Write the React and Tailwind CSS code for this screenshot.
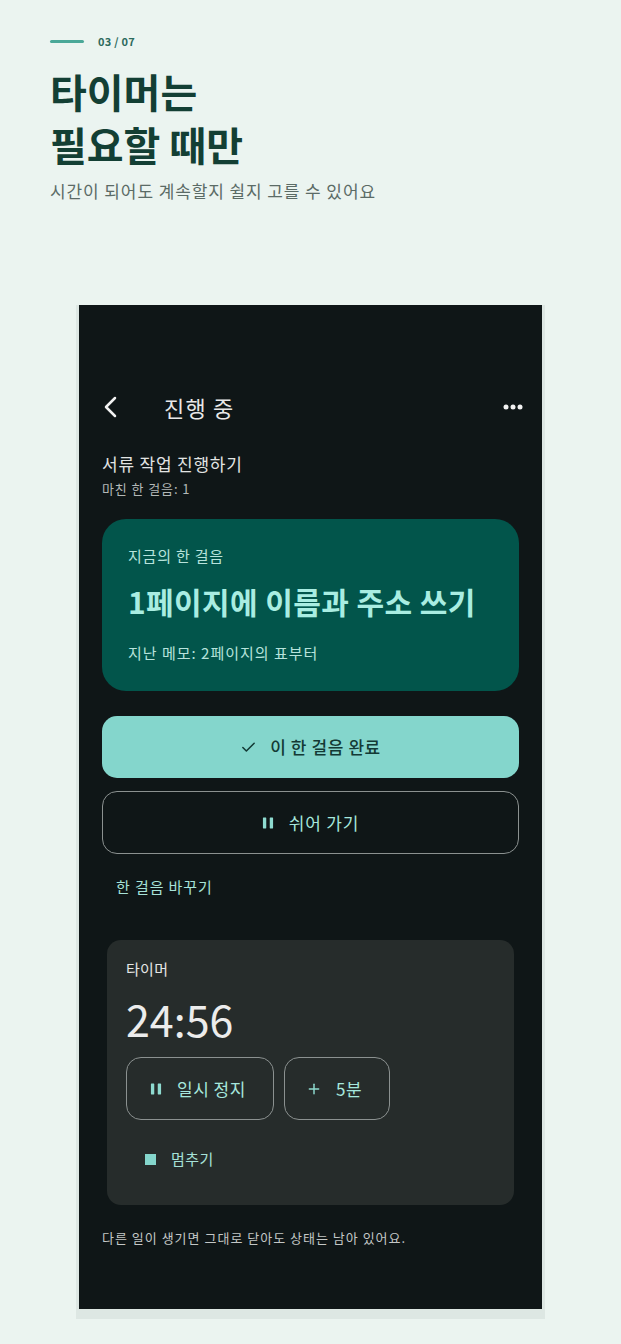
import { Check, Plus } from "lucide-react";

const font = { fontFamily: '"Noto Sans CJK KR", "Noto Sans", sans-serif' };

function PauseIcon({ className }) {
  return (
    <svg viewBox="0 0 12 13" className={className} fill="currentColor">
      <rect x="0.5" y="0.5" width="3.6" height="12" rx="0.5" />
      <rect x="7.9" y="0.5" width="3.6" height="12" rx="0.5" />
    </svg>
  );
}

function BackIcon() {
  return (
    <svg viewBox="0 0 16 22" className="h-[22px] w-[16px]" fill="none" stroke="#f2f2f2" strokeWidth="2.5" strokeLinecap="round" strokeLinejoin="round">
      <polyline points="13,2 4,11 13,20" />
    </svg>
  );
}

function Dots() {
  return (
    <svg viewBox="0 0 20 6" className="h-[6px] w-[20px]" fill="#f2f2f2">
      <circle cx="3" cy="3" r="2.5" />
      <circle cx="10" cy="3" r="2.5" />
      <circle cx="17" cy="3" r="2.5" />
    </svg>
  );
}

export default function App() {
  return (
    <div className="min-h-[1344px] w-full bg-[#ebf4f0]" style={font}>
      <div className="px-[50px] pt-[36px]">
        <div className="flex h-[11px] items-center gap-[14px]">
          <div className="h-[3px] w-[34px] rounded-full bg-[#4aa898]" />
          <span className="text-[11px] font-bold leading-none tracking-wide text-[#2d6a5d]">
            03 / 07
          </span>
        </div>
        <h1 className="mt-[18px] text-[40px] font-bold leading-[53px] text-[#133f34]">
          타이머는
          <br />
          필요할 때만
        </h1>
        <p className="mt-[7px] text-[17px] leading-[26px] tracking-[0.9px] text-[#5b6b66]">
          시간이 되어도 계속할지 쉴지 고를 수 있어요
        </p>
      </div>

      <div className="ml-[76px] mt-[101px] w-[469px] bg-[#dde7e3] pb-[10px]">
        <div className="ml-[3px] flex h-[1004px] w-[463px] flex-col bg-[#0f1617] px-[23px]">
          <div className="mt-[86px] flex h-[32px] items-center">
            <BackIcon />
            <span className="ml-[46px] text-[22px] leading-none tracking-[1.2px] text-[#e8e8e8]">진행 중</span>
            <div className="ml-auto mr-[-4px]">
              <Dots />
            </div>
          </div>

          <div className="mt-[29px] text-[17px] leading-[24px] tracking-[0.8px] text-[#e2e4e3]">서류 작업 진행하기</div>
          <div className="mt-[4px] text-[13px] leading-[18px] tracking-[0.9px] text-[#b3b8b7]">마친 한 걸음: 1</div>

          <div className="mt-[21px] rounded-[24px] bg-[#02554b] px-[26px] pb-[27px] pt-[26px]">
            <div className="text-[15px] leading-[22px] tracking-[0.8px] text-[#b7e3dc]">지금의 한 걸음</div>
            <div className="mt-[14px] text-[30px] font-bold leading-[40px] tracking-[0.4px] text-[#a9ede2]">
              1페이지에 이름과 주소 쓰기
            </div>
            <div className="mt-[21px] text-[15px] leading-[22px] tracking-[1px] text-[#b7e3dc]">지난 메모: 2페이지의 표부터</div>
          </div>

          <button className="mt-[25px] flex h-[62px] w-full items-center justify-center gap-[13px] rounded-[15px] bg-[#84d6cc] text-[17px] font-medium tracking-[0.6px] text-[#133a35]">
            <Check className="h-[17px] w-[17px]" strokeWidth={2.2} />
            이 한 걸음 완료
          </button>

          <button className="mt-[13px] flex h-[63px] w-full items-center justify-center gap-[15px] rounded-[15px] border border-[#8b9190] text-[17px] tracking-[0.8px] text-[#a6e7dd]">
            <PauseIcon className="h-[12px] w-[12px] text-[#8edbd0]" />
            쉬어 가기
          </button>

          <div className="ml-[14px] mt-[22px] text-[15px] leading-[22px] tracking-[0.9px] text-[#a6e2d8]">한 걸음 바꾸기</div>

          <div className="mx-[5px] mt-[42px] rounded-[14px] bg-[#262c2b] px-[19px] pb-[35px] pt-[18px]">
            <div className="text-[15px] leading-[22px] tracking-[0.3px] text-[#e4e6e5]">타이머</div>
            <div className="mt-[12px] text-[43px] leading-[52px] text-[#ececec]">24:56</div>
            <div className="mt-[13px] flex gap-[10px]">
              <button className="flex h-[63px] w-[148px] items-center gap-[15px] rounded-[15px] border border-[#8b9190] pl-[23px] text-[17px] tracking-[0.5px] text-[#a6e7dd]">
                <PauseIcon className="h-[12px] w-[12px] text-[#8edbd0]" />
                일시 정지
              </button>
              <button className="flex h-[63px] w-[106px] items-center gap-[14px] rounded-[15px] border border-[#8b9190] pl-[21px] text-[17px] tracking-[0.5px] text-[#a6e7dd]">
                <Plus className="h-[16px] w-[16px] text-[#8edbd0]" strokeWidth={2.2} />
                5분
              </button>
            </div>
            <div className="ml-[19px] mt-[28px] flex h-[22px] items-center gap-[15px]">
              <div className="h-[11px] w-[11px] bg-[#84d6cc]" />
              <span className="text-[15px] leading-[22px] tracking-[0.5px] text-[#a6e2d8]">멈추기</span>
            </div>
          </div>

          <div className="mt-[23px] text-[13px] leading-[20px] tracking-[1px] text-[#c3c7c6]">
            다른 일이 생기면 그대로 닫아도 상태는 남아 있어요.
          </div>
        </div>
      </div>
    </div>
  );
}
